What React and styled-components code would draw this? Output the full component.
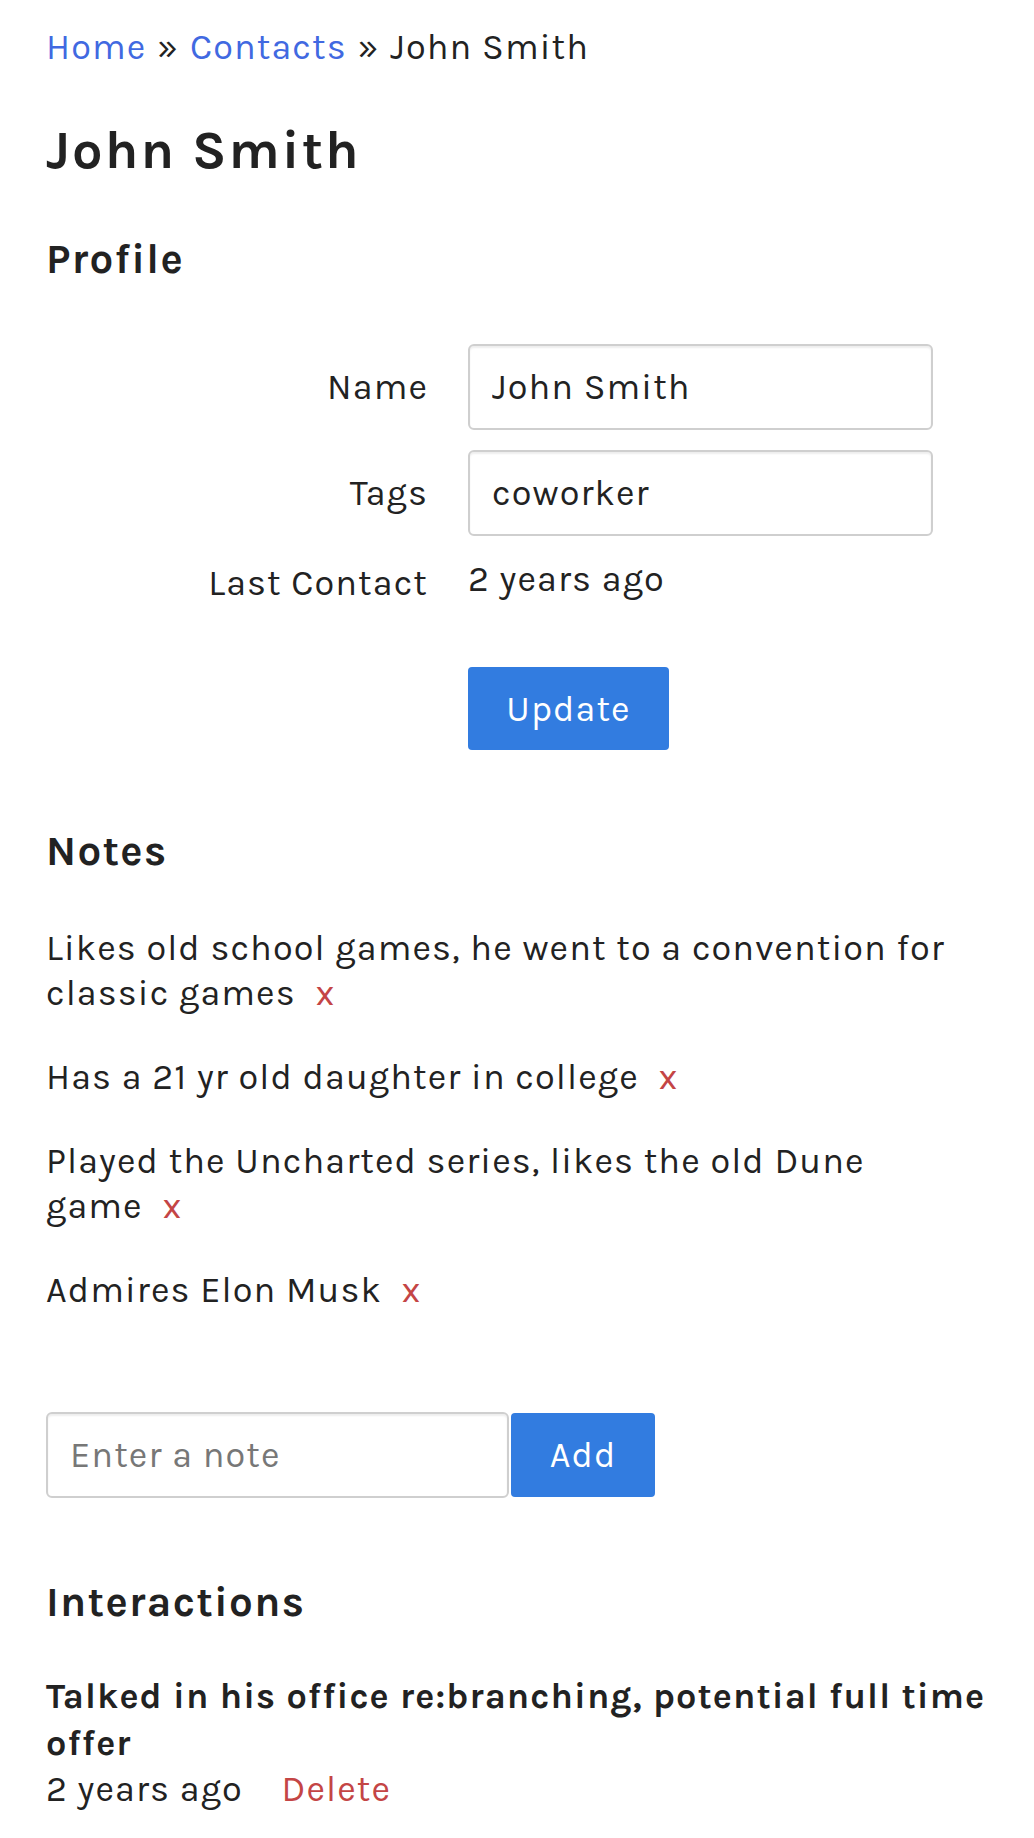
import React from "react";
import styled, { createGlobalStyle } from "styled-components";

const GlobalStyle = createGlobalStyle`
  html, body {
    margin: 0;
    padding: 0;
    background: #ffffff;
  }
  body {
    font-family: Karla, Inter, "Open Sans", sans-serif;
    font-size: 36px;
    line-height: 45px;
    letter-spacing: 1.1px;
    color: #222222;
  }
  * { box-sizing: border-box; }
`;

const Page = styled.main`
  padding: 25px 44px 40px 46px;
`;

const Breadcrumb = styled.nav`
  display: flex;
  align-items: baseline;
  gap: 11px;
  line-height: 45px;
`;

const Crumb = styled.a`
  color: #4169e1;
  text-decoration: none;
`;

const Sep = styled.span`
  color: #222222;
`;

const Current = styled.span`
  color: #222222;
`;

const Title = styled.h1`
  margin: 48px 0 0;
  font-size: 54px;
  line-height: 64.8px;
  font-weight: 700;
  letter-spacing: 2.1px;
`;

const SectionTitle = styled.h3`
  margin: ${(p) => p.$top}px 0 0;
  font-size: 42px;
  line-height: 50.4px;
  font-weight: 700;
  letter-spacing: 1.3px;
`;

const Form = styled.form`
  margin-top: 60px;
  display: flex;
  flex-direction: column;
  gap: 20px;
`;

const FormRow = styled.div`
  display: grid;
  grid-template-columns: 382px 465px;
  column-gap: 40px;
  align-items: ${(p) => (p.$static ? "start" : "center")};
`;

const Label = styled.label`
  text-align: right;
  padding-top: ${(p) => (p.$static ? "5px" : "0")};
`;

const Value = styled.div`
  padding-top: 1px;
`;

const TextInput = styled.input`
  display: block;
  width: ${(p) => p.$width || "100%"};
  height: 86px;
  padding: 0 22px;
  border: 2px solid #cfcfcf;
  border-radius: 6px;
  box-shadow: inset 0 2px 2px rgba(0, 0, 0, 0.07);
  background: #ffffff;
  font-family: inherit;
  font-size: 36px;
  letter-spacing: 1.1px;
  color: #222222;
  outline: none;
  &::placeholder {
    color: #777777;
  }
`;

const Actions = styled.div`
  margin-top: 41px;
  padding-left: 422px;
`;

const Button = styled.button`
  display: block;
  width: ${(p) => p.$width}px;
  height: ${(p) => p.$height}px;
  padding: 0;
  border: none;
  border-radius: 4px;
  background: #327ce0;
  color: #ffffff;
  font-family: inherit;
  font-size: 36px;
  letter-spacing: 1.1px;
  cursor: pointer;
`;

const NoteList = styled.ul`
  list-style: none;
  margin: 49px 0 0;
  padding: 0;
  display: flex;
  flex-direction: column;
  gap: 39px;
`;

const Note = styled.li`
  line-height: 45px;
`;

const RemoveLink = styled.a`
  margin-left: 20px;
  color: #c44545;
  text-decoration: none;
`;

const AddForm = styled.form`
  margin-top: 99px;
  display: flex;
  align-items: center;
  gap: 2px;
`;

const Interaction = styled.div`
  margin-top: 46px;
`;

const InteractionTitle = styled.div`
  font-weight: 700;
  line-height: 47px;
`;

const Meta = styled.div`
  line-height: 45px;
`;

const DeleteLink = styled.a`
  margin-left: 29px;
  color: #c44545;
  text-decoration: none;
`;

const notes = [
  "Likes old school games, he went to a convention for classic games",
  "Has a 21 yr old daughter in college",
  "Played the Uncharted series, likes the old Dune game",
  "Admires Elon Musk",
];

export default function App() {
  return (
    <>
      <GlobalStyle />
      <Page>
        <Breadcrumb>
          <Crumb href="#">Home</Crumb>
          <Sep>»</Sep>
          <Crumb href="#">Contacts</Crumb>
          <Sep>»</Sep>
          <Current>John Smith</Current>
        </Breadcrumb>

        <Title>John Smith</Title>

        <SectionTitle $top={51}>Profile</SectionTitle>
        <Form onSubmit={(e) => e.preventDefault()}>
          <FormRow>
            <Label>Name</Label>
            <TextInput defaultValue="John Smith" />
          </FormRow>
          <FormRow>
            <Label>Tags</Label>
            <TextInput defaultValue="coworker" />
          </FormRow>
          <FormRow $static>
            <Label $static>Last Contact</Label>
            <Value>2 years ago</Value>
          </FormRow>
          <Actions>
            <Button type="submit" $width={201} $height={83}>
              Update
            </Button>
          </Actions>
        </Form>

        <SectionTitle $top={76}>Notes</SectionTitle>
        <NoteList>
          {notes.map((n) => (
            <Note key={n}>
              {n}
              <RemoveLink href="#">x</RemoveLink>
            </Note>
          ))}
        </NoteList>

        <AddForm onSubmit={(e) => e.preventDefault()}>
          <TextInput $width="463px" placeholder="Enter a note" />
          <Button type="submit" $width={144} $height={84}>
            Add
          </Button>
        </AddForm>

        <SectionTitle $top={79}>Interactions</SectionTitle>
        <Interaction>
          <InteractionTitle>
            Talked in his office re:branching, potential full time offer
          </InteractionTitle>
          <Meta>
            2 years ago <DeleteLink href="#">Delete</DeleteLink>
          </Meta>
        </Interaction>
      </Page>
    </>
  );
}
